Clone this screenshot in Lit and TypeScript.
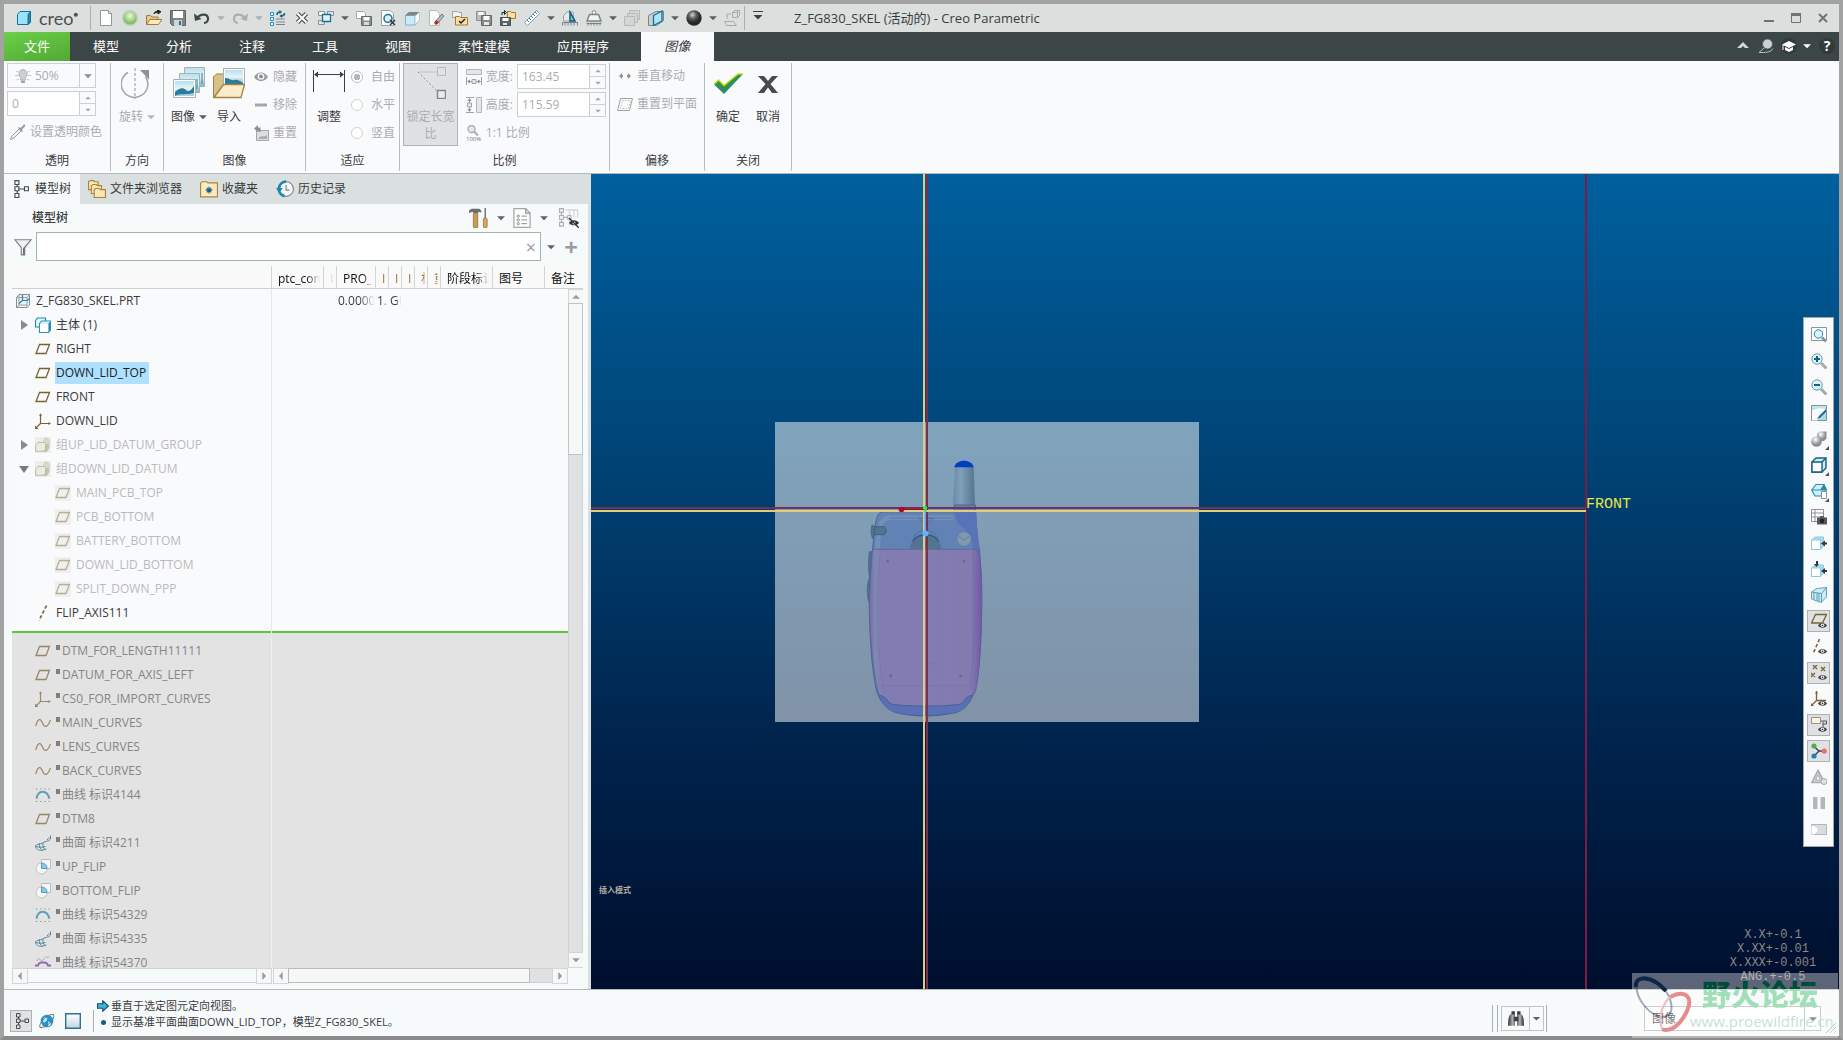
import { LitElement, html, svg, css, nothing } from "lit";
import { customElement, state } from "lit/decorators.js";
import { classMap } from "lit/directives/class-map.js";

const icons: Record<string, unknown> = {
  cube: svg`<path d="M1.5 4.5 4 1.500h10.500v10.500L12 14.500H1.500z" fill="#9be2fb" stroke="#1c6f94"/><path d="M12 14.500V4.500l2.500-3v10.500z" fill="#2b86ad" stroke="#1c6f94"/>`,
  newfile: svg`<path d="M2.500.500h8l3 3v12h-11z" fill="#fff" stroke="#8f9698"/><path d="M10.500.500v3h3" fill="#e3e6e6" stroke="#8f9698"/>`,
  green: svg`<circle cx="8" cy="8" r="7.300" fill="url(#gGreen)" stroke="#c3ccc6" stroke-width="1.400"/>`,
  open: svg`<path d="M.500 14.500V5.500h4l1.500 1.500h6v3" fill="#e6c88a" stroke="#a07c34"/><path d="M.500 14.500 4 9.500h12l-3.500 5z" fill="#fde9bf" stroke="#a07c34"/><path d="M8 4c0-2 2-3 5-2.500M11.500 0l3.500 1.700L12 4z" fill="#222" stroke="#222"/>`,
  save: svg`<path d="M.500.500h15v15h-13l-2-2z" fill="#7c8486" stroke="#5c6466"/><rect x="3" y="1" width="10" height="7" fill="#fff"/><rect x="4" y="10" width="8" height="6" fill="#cfd6d8"/><rect x="9" y="11" width="2" height="4" fill="#2f6f8d"/>`,
  undo: svg`<path d="M3 8.500C5 4.500 13 2.500 14 8c.500 3-1.500 5-4 5" fill="none" stroke="#3f4749" stroke-width="2.200"/><path d="M0 3.500 1 11l6.500-2z" fill="#3f4749"/>`,
  redo: svg`<path d="M13 8.500C11 4.500 3 2.500 2 8c-.500 3 1.500 5 4 5" fill="none" stroke="#a9afb0" stroke-width="2.200"/><path d="M16 3.500 15 11 8.500 9z" fill="#a9afb0"/>`,
  regen: svg`<path d="M.500 2.500h3v3h-3zM.500 7.500h3v3h-3zM.500 12.500h3v3h-3z" fill="#eaf6fb" stroke="#2590b8"/><path d="M6 9h9M6 12h9M6 14.500h9" stroke="#7d8587"/><path d="M7 5c0-2 1-3 3-3M14.500 3c0 2-1 3-3 3" fill="none" stroke="#15607f" stroke-width="1.500"/><path d="M9.500 0v4l2.500-2zM12 4v4L9.500 6z" fill="#15607f"/>`,
  closex: svg`<path d="m3.500 3.500 9 9m0-9-9 9" stroke="#4b5355" stroke-width="4.500"/><path d="m3.500 3.500 9 9m0-9-9 9" stroke="#fff" stroke-width="2"/>`,
  windows: svg`<path d="M.500 1.500h6v4h-6z" fill="#fff" stroke="#8b9294"/><path d="M9.500 1.500h6v4h-6zM.500 10.500h6v4h-6z" fill="#dfe4e4" stroke="#8b9294"/><path d="M4.500 4.500h8v7h-8z" fill="#dff4fb" stroke="#1c6f94" stroke-width="1.300"/>`,
  saveas: svg`<path d="M.500 1.500h7l2 2v5h-9z" fill="#fff" stroke="#a3a9ab"/><path d="M5.500 6.500h10v9h-10z" fill="#84898b" stroke="#64696b"/><rect x="7.500" y="7" width="6" height="3.500" fill="#fff"/><rect x="8" y="12" width="5" height="3" fill="#d5dadb"/>`,
  preview: svg`<path d="M1.500.500h9l3 3v12h-12z" fill="#fff" stroke="#9aa0a2"/><circle cx="8" cy="8.500" r="4" fill="#d8f0f8" stroke="#1c6f94" stroke-width="1.500"/><path d="m10 10 5 5m0-5-5 5" stroke="#33393b" stroke-width="1.500"/>`,
  paste: svg`<path d="M1.500 5.500 5 2.500h10v8l-4 4.500H1.500z" fill="#c8ecf8" stroke="#7fb6ca"/><path d="M1.500 5.500h9.500l4-3M11 5.500v9" fill="none" stroke="#7fb6ca"/><path d="M1 5.500 5 2h10l-4 3.500z" fill="#7c8587"/><path d="M11.500 14V6L15 3v7z" fill="#fff"/>`,
  erase: svg`<path d="M1.500.500h7l3 3v12h-10z" fill="#fafbfb" stroke="#b4b9bb"/><path d="m7 12 7-8 2 2-7 8z" fill="#b8bec0" stroke="#70777a"/><path d="m6.500 12 2-2 2.500 2.500-2 2c-1 1-3.500-1-2.500-2.500z" fill="#a83028"/>`,
  foldercheck: svg`<path d="M.500 1.500h5l1 1h3v5h-9z" fill="#f1f2f2" stroke="#9da3a5"/><path d="M3.500 6.500h4l1 1h7v7.500h-12z" fill="#fbdfa2" stroke="#a07c34"/><path d="m7 11 2 2 4-4" fill="none" stroke="#222" stroke-width="1.500"/>`,
  savecopy: svg`<path d="M.500 1.500h9v9h-9z" fill="#b9bebf" stroke="#8b9193"/><path d="M5.500 5.500h10v10h-10z" fill="#84898b" stroke="#64696b"/><rect x="7.500" y="6" width="6" height="4" fill="#fff"/><rect x="8" y="12" width="5" height="3" fill="#e5eaeb"/><rect x="2.500" y="2" width="5" height="3" fill="#fff"/>`,
  savebak: svg`<path d="M7.500 1.500h3l1 1h4v6h-8z" fill="#fbdfa2" stroke="#a07c34"/><path d="M.500 7.500h10v8h-10z" fill="#5f6668" stroke="#4a5052"/><rect x="2.500" y="8" width="6" height="3" fill="#fff"/><rect x="3" y="13" width="4" height="2" fill="#dfe4e5"/><path d="M2 5V2.500h3M4.500.500v4l2-2z" fill="none" stroke="#222"/>`,
  ruler: svg`<path d="M.500 12.500 12.500.500l3 3-12 12z" fill="#fff" stroke="#8fa0a6"/><path d="m3 10 2 2m0-4 2 2m0-4 2 2m0-4 2 2m0-4 2 2" stroke="#2b86ad"/>`,
  measure: svg`<path d="M1.500 11V5.500L5 2h6l1 9z" fill="#e4e8e9" stroke="#9aa0a2"/><path d="M8 2 13 11H8z" fill="#6ec6e4" stroke="#155a78" stroke-width="1.500"/><path d="M.500 12.500h15v3M3 12.500v3M6 12.500v3M9 12.500v3M12 12.500v3M.500 12.500v3" stroke="#7c8486" fill="none"/>`,
  weight: svg`<path d="M1 11 3.500 4.500h9L15 11z" fill="#f2f4f4" stroke="#7c8486" stroke-width="1.500"/><circle cx="8" cy="2.500" r="1.800" fill="#fff" stroke="#7c8486"/><path d="M.500 13.500h15M2 12.500v3M5 12.500v3M8 12.500v3M11 12.500v3M14 12.500v3" stroke="#7c8486"/>`,
  stack: svg`<g fill="#d2d6d7" stroke="#b4b9ba"><path d="M5.500.500h10v9h-10z"/><path d="M3.500 3.500h10v9h-10z"/><path d="M.500 6.500h10v9h-10z"/></g>`,
  plane3d: svg`<path d="M.500 5.500 8 1.500l7.500 0v9l-7 5h-8z" fill="#c9d0d1" stroke="#7c8486"/><path d="M5.500 5.500 14 1v10l-8.500 4.500z" fill="#a9e6fb" stroke="#1c6f94" stroke-width="1.300"/>`,
  sphere: svg`<circle cx="8" cy="8" r="7.700" fill="url(#gDark)"/>`,
  modelgray: svg`<g fill="none" stroke="#a4aaab"><path d="M8.500 2.500h4l2-2M8.500 2.500h5v5h-5zM13.500 7.500l2-2v-5h-5l-2 2M.500 11.500h9l3 4h-10zM3 9V4h4"/></g>`,
  caret: svg`<path d="M3.500 6h9L8 10.500z"/>`,
  up: svg`<path d="M2 10 8 4l6 6h-4L8 8l-2 2z" fill="#d3d8d8"/>`,
  searchw: svg`<circle cx="9.500" cy="6" r="5" fill="#c7d3d6" stroke="#565f60"/><path d="M6 10 1 14.500h3c5 0 9-.500 11-4" fill="none" stroke="#b9c0c1"/>`,
  cap: svg`<circle cx="8" cy="8" r="8" fill="#333a3a"/><path d="M1 6.500 8 3l7 3.500L8 10z" fill="#fff"/><path d="M4 9v3l4 2 4-2V9l-4 2z" fill="#fff"/><path d="M2 7v5" stroke="#fff"/>`,
  bulb: svg`<g stroke="#c4c7c8"><path d="M1 3l2.500 1M15 3l-2.500 1M0 7.500h3M16 7.500h-3M1.500 12 4 11M14.500 12 12 11"/></g><path d="M8 1.500a4.500 4.500 0 0 1 2.500 8V12h-5V9.500A4.500 4.500 0 0 1 8 1.500z" fill="#cdd0d1" stroke="#b2b5b6"/><path d="M6 12.500h4v2.500H6z" fill="#a3a6a7"/>`,
  picker: svg`<path d="M.500 15.500 2 12l7-7 2 2-7 7z" fill="#eff0f1" stroke="#9b9fa1"/><path d="M8 4l4 4 1-1-1-1.500 3-3C16 1 14.500 0 13.500 1l-3 3L9 3z" fill="#9b9fa1"/>`,
  rotate: svg`<path d="M14 1v31" stroke="#8d9193" stroke-dasharray="3 2"/><path d="M7 5.500A13.300 13.300 0 1 0 24.500 9.500" fill="none" stroke="#a3a7a9" stroke-width="1.500"/><path d="M19 3h9v9.500z" fill="#8d9193"/>`,
  images: svg`<g stroke="#a7b0b3"><path d="M11.500.500h20v19h-20z" fill="url(#gSky)"/><path d="M6.500 6.500h20v19h-20z" fill="url(#gSky)"/><path d="M.500 12.500h22v18h-22z" fill="#fff"/></g><rect x="2" y="14" width="19" height="15" fill="url(#gSky)"/><path d="M29 6v11M24 12v10" stroke="#2a7c9e" stroke-width="2" opacity=".5"/><path d="M2 25c4-4 8-5 11-2s5 0 8-4v10H2z" fill="#2a7c9e"/><path d="M2 29c5-3 12-1 19-3v3z" fill="#a9cfdc"/>`,
  importimg: svg`<path d="M.500 30V9.500L4 7h8v5h10v18z" fill="#dcc089" stroke="#a08344"/><rect x="10.500" y="1.500" width="21" height="17" fill="#fff" stroke="#a7b0b3"/><rect x="12" y="3" width="18" height="14" fill="url(#gSky)"/><path d="M12 11c4 0 6 3 9 2s6 1 9 3v1H12z" fill="#2a7c9e"/><path d="M1 30.500 10.500 17.500H31.500L28 30.500z" fill="#fdecc8" stroke="#a08344" stroke-width="1.300"/>`,
  eye: svg`<path d="M1 8c3-6 11-6 14 0-3 5.500-11 5.500-14 0z" fill="#999d9f"/><circle cx="8" cy="7.500" r="3.300" fill="#f9fafc"/><circle cx="8" cy="7.500" r="2" fill="#8b8f91"/>`,
  minus: svg`<path d="M2 6.500h12v3H2z" fill="#a3a7a9"/>`,
  reset: svg`<path d="M3.500 5.500h12v10h-12z" fill="#dcdfe0" stroke="#a3a7a9"/><path d="M5 14c3-5 5-1 9-4v4z" fill="#a9adae"/><path d="M1 3.500 5 0v2.500h2.500V7h-2V5H5v2z" fill="#8d9193"/>`,
  adjust: svg`<path d="M.500 3v22M31.500 3v22" stroke="#3b3f41"/><path d="M2 7.500h28" stroke="#3b3f41"/><path d="M1 7.500 5 4.500v6zM31 7.500 27 4.500v6z" fill="#3b3f41"/>`,
  lock: svg`<path d="M4 5h19" stroke="#c0c3c4"/><path d="m4 5 20 20" stroke="#8d9193" stroke-dasharray="2 2"/><path d="M23.500.500h8v8h-8z" fill="none" stroke="#b7babb"/><path d="M23.500 23.500h8v8h-8z" fill="#eceded" stroke="#85898b" stroke-width="1.500"/>`,
  wid: svg`<path d="M.500.500h15v5H.500z" fill="#e5e6e7" stroke="#b4b7b9"/><path d="M.500 8v8M15.500 8v8M2 12.500h12" stroke="#a0a3a5"/><path d="M1 12.500l3-2v4zM15 12.500l-3-2v4z" fill="#8d9193"/><path d="M6 10.500h4v4H6z" fill="#e5e6e7" stroke="#a0a3a5"/>`,
  hei: svg`<path d="M10.500.500h5v15h-5z" fill="#e5e6e7" stroke="#b4b7b9"/><path d="M0 .500h8M0 15.500h8M3.500 2v12" stroke="#a0a3a5"/><path d="M3.500 1l-2 3h4zM3.500 15l-2-3h4z" fill="#8d9193"/><path d="M1.500 6h4v4h-4z" fill="#e5e6e7" stroke="#a0a3a5"/>`,
  zoom100: svg`<circle cx="5.500" cy="4" r="3.500" fill="#e5e6e7" stroke="#a9adae" stroke-width="1.300"/><path d="m8 6.500 4 4" stroke="#a9adae" stroke-width="2"/><text x="0" y="16" font-size="6" fill="#707476">100%</text>`,
  hmove: svg`<path d="M6 8H4M12 8h-2" stroke="#8d9193" stroke-width="2"/><path d="M2 8l3-3v6zM14 8l-3-3v6z" fill="#8d9193"/>`,
  resetplane: svg`<path d="M3.500 2.500h12l-3 12H.500z" fill="none" stroke="#9fa3a5"/><path d="M5.500 4.500h8l-2 8h-8z" fill="none" stroke="#9fa3a5" stroke-dasharray="1 2"/>`,
  check: svg`<g transform="translate(0 1)"><path d="M2 16.500 6.500 12l5.500 5.500L26 6h5L12 26z" fill="#2f8f5b"/><path d="m2 16.500 4.500-4.500 5.500 5.500L26 6h5" fill="none" stroke="#c2e600" stroke-width="1.300"/></g>`,
  cross: svg`<path d="M6 9h6l4 5 4-5h6l-7.500 8L26 26h-6l-4-5.500L12 26H6l7.500-9z" fill="#4a4a4c"/>`,
  tree: svg`<g fill="none" stroke="#454b4d"><path d="M3.500 .500h3.500v3.500H3.500zM3.500 6h3.500v3.500H3.500zM3.500 12h3.500v3.500H3.500zM12 6h3.500v3.500H12zM5.500 4v2M5.500 9.500v2.500M7 8h5"/></g>`,
  folders: svg`<g fill="#fbe6b6" stroke="#a8853f"><path d="M.500 1.500 2 .500h3l1 1h3v7h-8.500z"/><path d="M3 5l1.500-1h3l1 1h3.500v7H3z"/><path d="M5.500 8.500 7 7.500h3l1 1h4.500v7h-10z"/></g>`,
  fav: svg`<path d="M.500 3 2 1.500h4l1 1h8.500v12.500H.500z" fill="#fce9bd" stroke="#a8853f"/><path d="M8 6v6M5 9h6M6 7l4 4m0-4-4 4" stroke="#15607f"/>`,
  history: svg`<circle cx="9" cy="8" r="6.500" fill="#f4f7f8" stroke="#7d8587"/><path d="M9 1.500a6.500 6.500 0 0 0-1.500 12.800" fill="none" stroke="#1f86b0" stroke-width="2.500"/><path d="M0 7h6L3 11.500z" fill="#1f86b0"/><path d="M9 4.500V9h3" fill="none" stroke="#777d7f"/>`,
  tools: svg`<path d="M0 4V2l2-1.500h6c1.500.500 2 1.500 2 3L7.500 3v1h-4L3 3z" fill="#6a6f72"/><rect x="3.500" y="4" width="3.500" height="12" rx="1" fill="#c99b55" stroke="#8d6a2c" stroke-width=".6"/><path d="M13 0v8" stroke="#70767a" stroke-width="1.200"/><rect x="11.500" y="8" width="3" height="8" rx="1.200" fill="#d8a95e" stroke="#8d6a2c" stroke-width=".6"/>`,
  list: svg`<path d="M1.500.500h9.500l3.500 3.500v11.500h-13z" fill="#fafbfb" stroke="#a3a9ab"/><path d="M11 .500V4h3.500" fill="none" stroke="#8b9193"/><g stroke="#8e9496" stroke-width=".8"><path d="M7.500 6.500H12M7.500 9.500H12M7.500 12.500H12"/></g><g fill="none" stroke="#7e8486" stroke-width=".7"><circle cx="5" cy="6.500" r=".9"/><circle cx="5" cy="9.500" r=".9"/><circle cx="5" cy="12.500" r=".9"/></g>`,
  treeeye: svg`<g fill="none" stroke="#a9adae" stroke-width=".9"><path d="M.500.500h3v3h-3zM.500 6h3v3h-3zM.500 11.500h3v3h-3zM2 4v2M2 9v2.500M4 7.500h3M7 6h2.500v3H7z"/></g><path d="M5 1.500h10M8.500 1v5M8.500 9v5M12 1.500v6M15 1.500v6" stroke="#cfd2d3" stroke-width=".9"/><path d="M8 12c2-3 6-3 8 0-2 2.500-6 2.500-8 0z" fill="#2c3032"/><circle cx="12" cy="12" r="1.200" fill="#fff"/><path d="m8 8 8 8" stroke="#2c3032"/>`,
  funnel: svg`<path d="M.700 1.500h14.600L9.500 8.500V15h-3V8.500z" fill="#f0f1f1" stroke="#7b8183"/><path d="M8 9v6h1.500V8.500L15 2z" fill="#6c7274"/>`,
  part: svg`<path d="M1.500 4.500 4 1.500h10.500V12L12 14.500H1.500z" fill="#eef1f2" stroke="#8b9193"/><path d="M1.500 4.500H12v10M12 4.500l2.500-3M4 2v10M4 12h8M1.500 14.500 4 12" fill="none" stroke="#8b9193" stroke-width=".8"/><path d="M7.500 2v5.500H12l2.500-2M4 10.500l3.500-3" fill="none" stroke="#1c86b0" stroke-width="1.200"/>`,
  body: svg`<path d="M.500 3.500 2.500 1h8v9h-10z" fill="#eaf8fd" stroke="#1c86b0" stroke-width="1.200"/><path d="M4.500 6.500 6.500 4h9v9l-2 2.500h-9z" fill="#d9f1fa" stroke="#2b93bb" stroke-width="1.200"/><path d="M5 7h8v8H5z" fill="#fff"/><path d="M13.500 15V6.500l2-2V13z" fill="#2b86ad"/>`,
  plane: svg`<path d="M4.500 3.500H14.500L11 12.500H1z" fill="none" stroke="#7b622e" stroke-width="1.300"/>`,
  csys: svg`<path d="M5.500 1v9.500H15M5.500 10.500 1 15" fill="none" stroke="#7b622e" stroke-width="1.200"/><path d="M4 2.800l1.500-2.500L7 2.800zM13.500 9l2.500 1.500-2.500 1.500zM0 12.500v3.500h3.500z" fill="#7b622e"/>`,
  group: svg`<rect width="16" height="16" fill="#ececea"/><circle cx="11.500" cy="4" r="3.500" fill="#d6d4c2"/><path d="M8 7c2 1 5 0 6-1 1 3 0 8-3 9H8z" fill="#bdbba2"/><path d="M.700 8 3 5.500h6.500l1 1v6l-2.500 1.800H.700z" fill="#ebeae0" stroke="#b6b49f"/>`,
  axis: svg`<path d="M11.500.500 4 15.500" stroke="#7b622e" stroke-width="1.600" stroke-dasharray="3.500 2"/>`,
  wave: svg`<path d="M.700 11C3 3 5.500 3 7.500 8s5 5 8-3" fill="none" stroke="#7b622e" stroke-width="1.200"/>`,
  curve: svg`<path d="M1.500 11.500c1.500-8.500 10-9.500 13 0" fill="none" stroke="#1c86b0" stroke-width="2"/><path d="M1 2h14M1 14.500h14" stroke="#5e6668" stroke-dasharray="1.200 3"/><path d="M2 8v5M14 8v5" stroke="#8b9193" stroke-dasharray="1 2"/>`,
  surf: svg`<path d="M15.500.500v3.500c-2 3-6 2-8 4-2 1.500-6 .500-7 3M14 2.500c-.500 1-1 1.500-2 2.500M.500 11c0 3 3 4.500 6 4.500l5-1.500M1 11.500c3 1 6 1 9.500 0M4.500 8.500C4 11 5 14 7 15M8 8c-.500 2 0 5 2 6.500" fill="none" stroke="#15607f"/>`,
  flip: svg`<path d="M6.500.500h9v9h-9z" fill="#fff" stroke="#a9adae"/><circle cx="6.500" cy="9.500" r="5.500" fill="#fff" stroke="#a9adae"/><path d="M6.500 4a5.500 5.500 0 0 1 5.500 5.500H6.500z" fill="#64c2e6" stroke="#1c86b0"/>`,
  purple: svg`<path d="M2 4c2-6 4 2 6-1s4-3 6-3" fill="none" stroke="#8b9193" transform="translate(0 2)"/><path d="M0 10.500h3l1-2 2-1h4l2 1 1 2h3" fill="none" stroke="#7030a0" stroke-width="1.800"/>`,
  zfit: svg`<path d="M.500.500h15v13H.500z" fill="#fff" stroke="#8f9698"/><circle cx="7.500" cy="7" r="4.200" fill="#dff3fa" stroke="#1c86b0"/><path d="m11 10.500 4 4" stroke="#8d9193" stroke-width="2.500"/>`,
  zin: svg`<circle cx="6" cy="6" r="5.200" fill="#dff3fa" stroke="#5d9db5"/><path d="M3 6h6M6 3v6" stroke="#15607f" stroke-width="2"/><path d="m10 10 5.500 5.500" stroke="#a4a8aa" stroke-width="3"/>`,
  zout: svg`<circle cx="6" cy="6" r="5.200" fill="#dff3fa" stroke="#5d9db5"/><path d="M3 6h6" stroke="#15607f" stroke-width="2"/><path d="m10 10 5.500 5.500" stroke="#a4a8aa" stroke-width="3"/>`,
  refit: svg`<path d="M.500.500h15v15H.500z" fill="#a6dcee" stroke="#8b9193"/><path d="M1 3h14V1H1z" fill="#c5e3ee"/><path d="M1 5c5-2 10-2 14-1-2 5-5 8-9 11.500H1z" fill="#fbfcfc"/><path d="m6 14 2-3 7-7v3l-6 6z" fill="#1c6f94"/>`,
  shade: svg`<path d="M6 2.500 9 .500h6.500v7L13 10H6z" fill="url(#gGrey)"/><circle cx="5.500" cy="10.500" r="5.300" fill="url(#gGrey)"/>`,
  wire: svg`<path d="M1 5 5 1h10v10l-4 4H1z" fill="#c6ecf9" stroke="#15607f" stroke-width="1.400"/><path d="M1 5h10v10H1z" fill="#fff" stroke="#15607f" stroke-width="1.400"/><path d="m11 5 4-4" stroke="#15607f" stroke-width="1.400"/>`,
  views: svg`<path d="M.700 7 5 1.500h8l2.500 5.500-4 6H4z" fill="#cdeffa" stroke="#2b8fb5" stroke-width="1.200"/><path d="M9 7 13 1l2.500 6z" fill="#2b86ad"/><path d="M.700 7H15" stroke="#2b8fb5"/><path d="M10.500 8.500h5v7h-5z" fill="#fff" stroke="#8b9193"/>`,
  camera: svg`<path d="M.500.500h12v12H.500zM.500 4h12M.500 8h12M4 .500v12M8 .500" fill="#fff" stroke="#8b9193"/><path d="M6 8.500h2.500l1-1.500h3l1 1.500H16v7H6z" fill="#54595b"/><circle cx="11" cy="12" r="2.200" fill="#222"/>`,
  secx: svg`<path d="M.500 5 4 2h8.500v9l-3 3.500h-9z" fill="#a6dcee" stroke="#8ccbe0"/><path d="M.500 5h9v9.500h-9z" fill="#fff" stroke="#8ccbe0"/><path d="m10 8.500 4-3v2h2v2h-2v2z" fill="#33393b"/>`,
  secy: svg`<path d="M.500 7 4 4h8.500v8l-3 3.500h-9z" fill="#a6dcee" stroke="#8ccbe0"/><path d="M.500 7h9v8.500h-9z" fill="#fff" stroke="#8ccbe0"/><path d="m10 10 4-3v2h2v2h-2v2zM5.500 6 3 3h2V0h2v3h1z" fill="#33393b"/>`,
  glass: svg`<path d="M.500 5 6 1.500l9.500-1V10L10 15.500.500 12z" fill="#c9ecf6" stroke="#6b9fb2"/><path d="m.500 5 10 1.500v9M10.500 6.500l5-6M3 5.500v7M6 6v8M8 6v8.500" fill="none" stroke="#5b9db6"/>`,
  eyeplane: svg`<path d="M4.500 1.500h11l-4 8.500H.500z" fill="none" stroke="#7b622e" stroke-width="1.300"/>`,
  eyeaxis: svg`<path d="M8.500 0 2 15" stroke="#7b622e" stroke-width="1.600" stroke-dasharray="3.500 2"/>`,
  eyepts: svg`<path d="m2 0 4 4m0-4L2 4m8-2 4 4m0-4-4 4M0 8l4 4m0-4-4 4" stroke="#7b622e" stroke-width="1.300"/>`,
  eyecsys: svg`<path d="M5.500 0v9.500H15M5.500 9.500.500 14.500" fill="none" stroke="#7b622e" stroke-width="1.300"/><path d="M4 2.500 5.500 0 7 2.500zM0 12v3h3z" fill="#7b622e"/>`,
  eyenote: svg`<path d="M.500.500h9v6h-9z" fill="#fdf3d2" stroke="#8f9698"/><path d="M10 4h5.500v3H12M12 5v5" fill="none" stroke="#4c5254"/>`,
  spin: svg`<path d="M3 3.500 8 8l5 0M8 8l-5 5" fill="none" stroke="#3b3f41" stroke-width="1.300"/><circle cx="3" cy="3" r="2.600" fill="#4caf50"/><circle cx="3" cy="13" r="2.600" fill="#2180b5"/><circle cx="13.300" cy="8" r="2.600" fill="#ea6f6f"/>`,
  tri: svg`<path d="M7 1.500 13.500 13.500H.900z" fill="#d3d5d6" stroke="#a9acae" stroke-width="1.600"/><path d="M7 6 9.500 11h-5z" fill="#fff" stroke="#a9acae"/><circle cx="13" cy="12.500" r="3" fill="#dfe0e1" stroke="#a9acae"/>`,
  pause: svg`<path d="M2 2h4.500v12H2zM9.500 2H14v12H9.500z" fill="#b4b7b8"/>`,
  exit: svg`<path d="M.500 3.500h15v10H.500z" fill="#d9dbdc" stroke="#b4b7b8"/><path d="M.500 5c7 0 8 6 2 8.500H.500z" fill="#fff"/>`,
  globe: svg`<circle cx="8" cy="8" r="6.300" fill="#2196cc"/><path d="M5 4c2 0 4 1 3 3s-3 3-4 2zM9 9c2-1 3 1 3 2s-2 3-3 2z" fill="#bfe8f8"/><path d="M1 14.500C-1 10 9 0 14.500 1.500 17 6 6 16 1 14.500z" fill="none" stroke="#6b7173"/>`,
  square: svg`<path d="M.700.700h14.600v14.600H.700z" fill="url(#gSq)" stroke="#33708c" stroke-width="1.400"/>`,
  bino: svg`<path d="M2 5 4 3h3v11H1c0-3 0-6 1-9zM14 5l-2-2H9v11h6c0-3 0-6-1-9z" fill="url(#gBino)"/><path d="M4 1h3v3H4zM9 1h3v3H9zM6 6h4v4H6z" fill="#3b3f41"/>`,
  arrowr: svg`<path d="M.700 5h7V1l7.500 7-7.500 7v-4h-7z" fill="#3fb3da" stroke="#12506b" stroke-width="1.400"/>`,
};

const EYES = ["eyeplane", "eyeaxis", "eyepts", "eyecsys", "eyenote"];
const BIG = ["rotate", "images", "importimg", "adjust", "lock", "check", "cross"];

const icon = (name: string, cls = "") => html`<svg
  class="ic ${cls}"
  aria-hidden="true"
  viewBox=${BIG.includes(name) ? "0 0 32 32" : "0 0 16 16"}
>${icons[name]}${EYES.includes(name)
    ? svg`<path d="M7 12.500c2-3.500 7-3.500 9 0-2 3-7 3-9 0z" fill="#3b3f41"/><circle cx="11.500" cy="12.300" r="1.800" fill="#fff"/><circle cx="11.500" cy="12.300" r=".9" fill="#3b3f41"/>`
    : nothing}</svg>`;

const QUICK: [string, string][] = [
  ["newfile", "新建"], ["green", "选择工作目录"], ["open", "打开"], ["save", "保存"],
  ["undo", "撤消"], [">dim", "撤消列表"], ["redo", "重做"], [">dim", "重做列表"],
  ["regen", "重新生成"], ["closex", "关闭"], ["windows", "窗口"], [">", "窗口列表"],
  ["saveas", "另存为"], ["preview", "预览"], ["paste", "粘贴"], ["erase", "拭除"],
  ["foldercheck", "检查"], ["savecopy", "保存副本"], ["savebak", "保存备份"],
  ["ruler", "测量"], [">", "测量列表"], ["measure", "截面"], ["weight", "质量属性"],
  [">", "质量列表"], ["stack", "层"], ["plane3d", "平面"], [">", "平面列表"],
  ["sphere", "外观"], [">", "外观列表"], ["modelgray", "模型显示"],
];

const MENUS = ["模型", "分析", "注释", "工具", "视图", "柔性建模", "应用程序"];

interface Node { t: string; i: string; l?: number; e?: "open" | "closed"; s?: "dim" | "late"; sel?: boolean }
const ACTIVE: Node[] = [
  { t: "主体 (1)", i: "body", e: "closed" },
  { t: "RIGHT", i: "plane" },
  { t: "DOWN_LID_TOP", i: "plane", sel: true },
  { t: "FRONT", i: "plane" },
  { t: "DOWN_LID", i: "csys" },
  { t: "组UP_LID_DATUM_GROUP", i: "group", e: "closed", s: "dim" },
  { t: "组DOWN_LID_DATUM", i: "group", e: "open", s: "dim" },
  { t: "MAIN_PCB_TOP", i: "plane", l: 2, s: "dim" },
  { t: "PCB_BOTTOM", i: "plane", l: 2, s: "dim" },
  { t: "BATTERY_BOTTOM", i: "plane", l: 2, s: "dim" },
  { t: "DOWN_LID_BOTTOM", i: "plane", l: 2, s: "dim" },
  { t: "SPLIT_DOWN_PPP", i: "plane", l: 2, s: "dim" },
  { t: "FLIP_AXIS111", i: "axis" },
];
const LATE: Node[] = ([
  ["DTM_FOR_LENGTH11111", "plane"], ["DATUM_FOR_AXIS_LEFT", "plane"],
  ["CS0_FOR_IMPORT_CURVES", "csys"], ["MAIN_CURVES", "wave"], ["LENS_CURVES", "wave"],
  ["BACK_CURVES", "wave"], ["曲线 标识4144", "curve"], ["DTM8", "plane"],
  ["曲面 标识4211", "surf"], ["UP_FLIP", "flip"], ["BOTTOM_FLIP", "flip"],
  ["曲线 标识54329", "curve"], ["曲面 标识54335", "surf"], ["曲线 标识54370", "purple"],
] as [string, string][]).map(([t, i]) => ({ t, i, s: "late" as const }));

const COLS: [string, string][] = [
  ["ptc_com", "c52"], ["I", "c13 pale"], ["PRO_", "c39"], ["I", "c13"], ["I", "c13"],
  ["I", "c13"], ["材", "c13"], ["重", "c13"], ["阶段标记", "c52"], ["图号", "c52 full"], ["备注", "c39 full"],
];
const VALUES = ["", "", "0.0000", "1.", "GB", "", "", "", "", "", ""];

const VIEW_TOOLS: [string, string, string][] = [
  ["zfit", "重新调整", ""], ["zin", "放大", ""], ["zout", "缩小", ""], ["refit", "重画", ""],
  ["shade", "渲染选项", "more"], ["wire", "显示样式", "more"], ["views", "已保存方向", "more"],
  ["camera", "视图管理器", ""], ["secx", "截面 X", ""], ["secy", "截面 Y", ""], ["glass", "透视图", ""],
  ["eyeplane", "平面显示", "on"], ["eyeaxis", "轴显示", ""], ["eyepts", "点显示", "on"],
  ["eyecsys", "坐标系显示", ""], ["eyenote", "注释显示", "on"], ["spin", "旋转中心", "on"],
  ["tri", "仿真", ""], ["pause", "暂停", ""], ["exit", "退出", ""],
];

@customElement("app-root")
export class AppRoot extends LitElement {
  @state() private fit = "自由";

  static styles = css`
    :host {
      display: block;
      font: 12px/16px "Open Sans", "Noto Sans CJK SC", sans-serif;
      color: #3b3b3d;
    }
    * { box-sizing: border-box; }
    button, input, select { font: inherit; color: inherit; margin: 0; }
    button { background: none; border: 0; padding: 0; display: flex; align-items: center; justify-content: center; white-space: nowrap; }
    .ic { width: 16px; height: 16px; flex: none; display: block; }
    .big { width: 32px; height: 32px; }
    .defs { position: absolute; width: 0; height: 0; }
    .window {
      height: 100vh; display: flex; flex-direction: column;
      border: 4px solid #a2a2a2; border-bottom-color: #8b8b8b; background: #f9fafc;
    }

    .title { flex: none; height: 28px; display: flex; align-items: center; background: #dbe0df; padding: 0 3px 0 12px; }
    .brand { display: flex; align-items: center; gap: 7px; width: 74px; font: 18px/24px "Lato", sans-serif; color: #4b4f51; }
    .brand sup { font-size: 8px; line-height: 8px; align-self: flex-start; margin-left: -7px; margin-top: 4px; }
    .sep { width: 1px; height: 24px; background: #a9afb0; flex: none; }
    .quick { display: flex; align-items: center; padding-left: 3px; }
    .quick button { width: 24px; height: 24px; }
    .quick .drop { width: 14px; }
    .drop .ic { width: 14px; height: 14px; fill: #5a6163; }
    .drop.dim .ic { fill: #a9afb0; }
    .quick .custom { width: 25px; flex-direction: column; }
    .bar { width: 10px; height: 1px; background: #3b3f41; margin-bottom: -3px; }
    .custom .ic { fill: #3b3f41; }
    .title h1 { font-size: 13px; line-height: 20px; font-weight: 400; margin: 0 0 0 24px; flex: 1; }
    .ctl { width: 27px; height: 24px; }
    .ctl .ic { width: 12px; height: 12px; }

    .menu { flex: none; height: 29px; display: flex; background: #3d4646; color: #fff; font-size: 13px; }
    .menu a { color: inherit; text-decoration: none; padding: 0 24px 0 23px; line-height: 29px; }
    .menu .file { background: linear-gradient(165deg, #6ad048, #52a834); padding: 0 20px; }
    .menu .cur { background: #f9fafc; color: #3b3b3d; font-style: italic; margin-left: 8px; }
    .menu .right { margin-left: auto; display: flex; align-items: center; gap: 7px; padding-right: 4px; padding-bottom: 2px; }
    .menu .drop { width: 14px; margin: 0 -2px 0 -4px; }
    .menu .drop .ic { fill: #fff; }
    .help { font-weight: 700; font-size: 14px; width: 16px; height: 16px; border-radius: 8px; background: #333a3a; color: #fff; }

    .ribbon { flex: none; height: 113px; display: flex; padding: 2px 0; border-bottom: 1px solid #b4bbbc; background: #f9fafc; }
    .group { display: flex; flex-direction: column; justify-content: space-between; border-right: 1px solid #b8bdbf; padding: 0 3px 1px; }
    .group > .body { display: flex; }
    .group > .name { text-align: center; line-height: 18px; }
    .w107 { width: 107px; } .w53 { width: 53px; } .w142 { width: 142px; } .w94 { width: 94px; }
    .w210 { width: 210px; } .w95 { width: 95px; } .w87 { width: 87px; }
    .body.shift { padding-left: 2px; }
    .rows { display: flex; flex-direction: column; gap: 3px; }
    .rows.low { padding-top: 1px; }
    .rows.gap { margin-left: 4px; }
    .rows.gap2 { margin-left: 2px; }
    .rows.gap8 { margin-left: 8px; }
    .row { height: 25px; display: flex; align-items: center; justify-content: flex-start; gap: 4px; white-space: nowrap; }
    .pick { padding-left: 3px; }
    .off { color: #aaadaf; }
    .tall { flex-direction: column; justify-content: flex-start; padding-top: 4px; white-space: nowrap; }
    .tall span { margin-top: 9px; line-height: 18px; display: flex; align-items: center; }
    .tall .ar { width: 14px; height: 14px; margin: 0 -3px 0 1px; fill: #5a5d5f; }
    .tall.off .ar { fill: #b4b7b9; }
    .w47 { width: 47px; }
    .w40 { width: 40px; }
    .lock { width: 56px; height: 83px; background: #dfe1e3; border: 1px solid #aeb1b3; padding-top: 3px; }
    .lock span { display: block; width: 50px; white-space: normal; line-height: 17px; text-align: center; }
    .field { position: relative; display: flex; height: 25px; background: #fff; border: 1px solid #cdd0d2; width: 89px; }
    .field input, .field select { flex: 1; min-width: 0; border: 0; background: transparent; padding: 0 4px; outline: 0; appearance: none; }
    .field .nib { width: 16px; border-left: 1px solid #cdd0d2; display: flex; flex-direction: column; }
    .nib button { flex: 1; background: #f9fafc; }
    .nib button + button { border-top: 1px solid #cdd0d2; }
    .nib .ic { width: 10px; height: 10px; fill: #a3a7a9; }
    .flipv { transform: scaleY(-1); }
    .combo { background: #f9fafc; align-items: center; padding-left: 7px; }
    .combo .nib { height: 100%; justify-content: center; align-items: center; }
    .combo .nib .ic { width: 14px; height: 14px; fill: #8d9193; }
    .radio { gap: 8px; }
    .radio input { appearance: none; width: 12px; height: 12px; border: 1px solid #cfd2d4; border-radius: 6px; background: #fff; }
    .radio input:checked { background: radial-gradient(circle, #b4b7b9 3px, #fff 3px); border-color: #b9bcbe; }

    .main { flex: 1; min-height: 0; display: flex; }
    .side { flex: none; width: 587px; display: flex; flex-direction: column; border-right: 3px solid #dae0df; background: #f7fafb; }
    .tabs { flex: none; height: 30px; background: #dae0df; display: flex; align-items: stretch; }
    .tabs button { gap: 4px; padding: 0 10px 0 8px; }
    .tabs .on { background: #f7fafb; gap: 6px; padding: 0 9px 0 7px; }
    .tabs .ic { width: 18px; height: 18px; }
    .bar2 { flex: none; height: 28px; display: flex; align-items: center; padding: 0 9px 0 28px; }
    .bar2 h2 { font-size: 12px; font-weight: 500; margin: 0 auto 0 0; }
    .bar2 .ic { width: 20px; height: 20px; }
    .bar2 .drop { width: 23px; }
    .bar2 .last { margin-left: 4px; }
    .bar2 .drop .ic, .find .drop .ic { width: 14px; height: 14px; }
    .find { flex: none; display: flex; align-items: center; padding: 0 10px; height: 29px; margin-bottom: 5px; }
    .find > .ic { width: 18px; height: 18px; margin-right: 4px; }
    .find .box { flex: 1; height: 29px; display: flex; border: 1px solid #a3b3b0; background: #fff; }
    .find input { flex: 1; border: 0; outline: 0; background: transparent; }
    .find .clear { width: 18px; color: #9a9d9f; font-size: 18px; }
    .find .drop { width: 19px; }
    .plus { width: 14px; color: #999c9e; font-size: 24px; font-weight: 700; margin-left: 4px; }
    .grid { flex: 1; min-height: 0; margin: 0 5px 0 8px; position: relative; overflow: hidden; background: #f9fafc; }
    table { border-collapse: separate; border-spacing: 0; table-layout: fixed; width: 100%; }
    th { height: 23px; padding: 3px 0 0 6px; text-align: left; font-weight: 400; color: #111; background: #f9f9f9; border-left: 1px solid #d3d5d6; border-bottom: 1px solid #ccd0d1; overflow: hidden; white-space: nowrap; }
    th:first-child { border-left: 0; }
    th div { overflow: hidden; line-height: 18px; margin-right: 3px; -webkit-mask-image: linear-gradient(90deg, #000 70%, transparent); mask-image: linear-gradient(90deg, #000 70%, transparent); }
    th.full div { -webkit-mask-image: none; mask-image: none; margin: 0; }
    .c13 div { color: #a5762c; margin-right: 2px; }
    .pale div { color: #e9dcc4; }
    .ctree { width: 259px; } .c52 { width: 52px; } .c39 { width: 39px; } .c13 { width: 13px; }
    td { height: 24px; padding: 0; white-space: nowrap; overflow: hidden; }
    td div { overflow: hidden; padding-left: 2px; -webkit-mask-image: linear-gradient(90deg, #000 60%, transparent); mask-image: linear-gradient(90deg, #000 60%, transparent); }
    td:nth-child(2) { border-left: 1px solid #e6e9ea; }
    .tn span.line { display: flex; align-items: center; height: 24px; padding-left: 4px; }
    .root .tn span.line { padding-left: 3px; }
    .deep .tn span.line { padding-left: 24px; }
    .exp { width: 19px; height: 16px; display: flex; align-items: center; padding-left: 5px; flex: none; }
    .exp i { border: 5px solid transparent; border-left: 7px solid #8b8b8d; border-right: 0; }
    .exp .dn { border: 5px solid transparent; border-top: 7px solid #7b7b7d; border-bottom: 0; margin-left: -2px; }
    .lab { margin-left: 4px; padding: 0 1px; line-height: 22px; }
    .sel .lab { background: #ade1ff; color: #222; padding-right: 3px; }
    .dim { color: #b9babb; }
    .dim .tn .ic { opacity: .9; }
    .deep .tn .ic { opacity: .5; background: #e6e6e4; }
    .late { color: #858585; background: #e3e3e3; }
    .late .tn .ic { opacity: .7; }
    .late td:nth-child(2) { border-left-color: #f1f1f1; }
    .late .lab { display: flex; gap: 2px; }
    .late .lab::before { content: ""; width: 4px; height: 5px; margin-top: 5px; background: #7f7f7f; }
    .insert td { height: 14px; background: linear-gradient(#f9fafc 6px, #5cc83c 6px, #5cc83c 8px, #e3e3e3 8px); }
    .vbar { position: absolute; right: 0; top: 23px; bottom: 0; width: 15px; display: flex; flex-direction: column; background: #dfe1e3; border: 1px solid #cfd2d3; }
    .vbar button, .hbar button { flex: none; width: 14px; height: 14px; background: #f6f7f7; outline: 1px solid #d3d6d7; }
    .vbar .ic, .hbar .ic { width: 14px; height: 14px; fill: #9a9d9f; }
    .vthumb { flex: 3; background: #f6f7f7; outline: 1px solid #c0c3c4; }
    .vrest { flex: 10; }
    .left { transform: rotate(90deg); } .rightw { transform: rotate(-90deg); }
    .hbars { flex: none; height: 15px; margin: 0 20px 6px 8px; display: flex; gap: 1px; }
    .hbar { display: flex; height: 15px; border: 1px solid #cfd2d3; background: #f7fafb; }
    .hbar.a { width: 260px; justify-content: space-between; }
    .hbar.b { flex: 1; background: #dfe1e3; }
    .hthumb { flex: 10; margin-left: 1px; background: #f6f7f7; outline: 1px solid #b9bcbd; }
    .hrest { flex: 1; }

    .view { flex: 1; min-width: 0; position: relative; overflow: hidden; background: linear-gradient(#00609e, #004679 32%, #00244d 69%, #000e2d); }
    .datum { position: absolute; }
    .rv { left: 335px; top: 0; bottom: 0; width: 2px; background: #7d2c54; }
    .yv { left: 332px; top: 0; bottom: 0; width: 2px; background: #d9cf7c; }
    .edge { left: 994px; top: 0; bottom: 0; width: 2px; background: #7f1a46; }
    .rh { left: 0; width: 995px; top: 333px; height: 2px; background: #7d2c54; }
    .yh { left: 0; width: 995px; top: 336px; height: 2px; background: #d9cf7c; }
    .picture { position: absolute; left: 184px; top: 248px; width: 424px; height: 300px; }
    .handles { position: absolute; left: 306px; top: 324px; width: 40px; height: 40px; }
    .flabel { position: absolute; left: 995px; top: 322px; font: 15px/18px "Liberation Mono", monospace; color: #e6e640; }
    .mode { position: absolute; left: 8px; bottom: 92px; font-size: 8px; font-weight: 600; line-height: 14px; color: #b5aca0; }
    .tol { position: absolute; right: 19px; bottom: 5px; width: 94px; text-align: center; font: 12px/14px "Liberation Mono", monospace; color: #8b8782; }
    .tool { position: absolute; right: 5px; top: 143px; width: 31px; padding: 4px 3px; background: #f9fafb; border: 1px solid #a3a6a8; }
    .tool button { position: relative; width: 23px; height: 26px; }
    .tool .on::before { content: ""; position: absolute; inset: 2px 0; border: 1px solid #aeb1b3; background: #dfe1e3; }
    .tool .ic { position: relative; }
    .tool .more::after { content: ""; position: absolute; right: 1px; bottom: 2px; border-left: 4px solid transparent; border-bottom: 4px solid #4c5052; }

    .status { flex: none; height: 47px; position: relative; border-top: 1px solid #b4bbbc; background: #f7fafb; display: flex; align-items: flex-end; padding: 0 2px 4px 6px; }
    .status .sq { width: 22px; height: 22px; margin-right: 4px; }
    .status .sq.on { background: #dfe1e3; border: 1px solid #aeb1b3; }
    .vs { width: 1px; height: 22px; background: #a9afb0; margin-left: 5px; }
    .msg { font-size: 11px; line-height: 16px; margin: 0 auto 2px 3px; padding: 0; list-style: none; }
    .msg li { display: flex; align-items: center; gap: 2px; }
    .msg .ic { width: 12px; height: 12px; }
    .dot { width: 12px; display: flex; justify-content: center; }
    .dot i { width: 5px; height: 5px; border-radius: 3px; background: #15607f; }
    .find3 { display: flex; align-items: center; gap: 3px; height: 27px; border-left: 1px solid #a9afb0; border-right: 1px solid #a9afb0; padding: 0 2px 0 4px; margin-right: 97px; }
    .find3 .inner { display: flex; height: 25px; border: 1px solid #c3c6c8; }
    .find3 .vs { margin: 0; height: 27px; }
    .find3 button { width: 27px; }
    .find3 .drop { width: 14px; border-left: 1px solid #c3c6c8; }
    .find3 .ic { width: 18px; height: 18px; }
    .find3 .drop .ic { width: 13px; height: 13px; }
    .filter { width: 177px; padding-left: 3px; margin-right: 16px; margin-bottom: 1px; color: #222; border-color: #aeb1b3; }
    .filter .nib { align-items: center; justify-content: center; border-color: #aeb1b3; }
    .filter .nib .ic { width: 14px; height: 14px; fill: #4c5052; }
    .grip { position: absolute; right: 2px; bottom: 2px; width: 12px; height: 12px; }
    .mark { position: absolute; right: 1px; bottom: -2px; width: 206px; height: 65px; background: rgba(255, 255, 255, .36); overflow: hidden; pointer-events: none; }
    .mark svg { position: absolute; left: 0; top: 0; width: 60px; height: 62px; }
    .mark b { position: absolute; left: 70px; top: 3px; font: 900 29px/34px "Noto Sans CJK SC", sans-serif; white-space: nowrap; color: transparent; background: linear-gradient(#004c3a 13px, #a0dfb8 13px); -webkit-background-clip: text; background-clip: text; }
    .mark span { position: absolute; left: 58px; top: 39px; font: 15px/18px "Open Sans", sans-serif; color: #c3e2dc; }
  `;

  private spinField(id: string, label: string, value: string) {
    return html`<div class="field off">
      <input id=${id} aria-label=${label} .value=${value} />
      <div class="nib">
        <button aria-label="${label}增大">${icon("caret", "flipv")}</button>
        <button aria-label="${label}减小">${icon("caret")}</button>
      </div>
    </div>`;
  }

  private treeRow(n: Node) {
    return html`<tr class=${classMap({ dim: n.s === "dim", late: n.s === "late", sel: !!n.sel, deep: n.l === 2 })}>
      <td class="tn"><span class="line">
        <span class="exp">${n.e ? html`<i class=${n.e === "open" ? "dn" : ""}></i>` : nothing}</span>
        ${icon(n.i)}<span class="lab">${n.t}</span>
      </span></td>
      <td colspan="11"></td>
    </tr>`;
  }

  private renderTop() {
    return html`
      <header class="title">
        <div class="brand">${icon("cube")}<span>creo</span><sup>●</sup></div>
        <i class="sep"></i>
        <div class="quick">
          ${QUICK.map(([n, l]) => n.startsWith(">")
            ? html`<button class="drop ${n.slice(1)}" aria-label=${l}>${icon("caret")}</button>`
            : html`<button aria-label=${l}>${icon(n)}</button>`)}
          <i class="sep"></i>
          <button class="custom" aria-label="自定义快速访问工具栏"><i class="bar"></i>${icon("caret")}</button>
        </div>
        <h1>Z_FG830_SKEL (活动的) - Creo Parametric</h1>
        <button class="ctl" aria-label="最小化"><svg class="ic" viewBox="0 0 12 12"><path d="M1 8h10v2H1z" fill="#6e7375"/></svg></button>
        <button class="ctl" aria-label="最大化"><svg class="ic" viewBox="0 0 12 12"><path d="M1.500 2v8.500h9V2" fill="none" stroke="#6e7375"/><path d="M1 1h10v3H1z" fill="#6e7375"/></svg></button>
        <button class="ctl" aria-label="关闭"><svg class="ic" viewBox="0 0 12 12"><path d="m2 2 8 8m0-8-8 8" stroke="#6e7375" stroke-width="2"/></svg></button>
      </header>
      <nav class="menu">
        <a class="file" href="#file">文件</a>
        ${MENUS.map((m) => html`<a href="#${m}">${m}</a>`)}
        <a class="cur" href="#image">图像</a>
        <div class="right">
          <button aria-label="最小化功能区">${icon("up")}</button>
          <button aria-label="搜索">${icon("searchw")}</button>
          <button aria-label="学习">${icon("cap")}</button>
          <button class="drop" aria-label="学习列表">${icon("caret")}</button>
          <button class="help" aria-label="帮助">?</button>
        </div>
      </nav>`;
  }

  private renderRibbon() {
    return html`<section class="ribbon">
      <div class="group w107"><div class="body"><div class="rows">
        <div class="field combo off">${icon("bulb")}
          <select aria-label="透明度"><option>50%</option></select>
          <span class="nib">${icon("caret")}</span></div>
        ${this.spinField("alpha", "透明值", "0")}
        <button class="row pick off">${icon("picker")}<span>设置透明颜色</span></button>
      </div></div><div class="name">透明</div></div>

      <div class="group w53"><div class="body">
        <button class="tall w47 off">${icon("rotate", "big")}<span>旋转${icon("caret", "ar")}</span></button>
      </div><div class="name">方向</div></div>

      <div class="group w142"><div class="body shift">
        <button class="tall w40">${icon("images", "big")}<span>图像${icon("caret", "ar")}</span></button>
        <button class="tall w40">${icon("importimg", "big")}<span>导入</span></button>
        <div class="rows low gap">
          <button class="row off">${icon("eye")}<span>隐藏</span></button>
          <button class="row off">${icon("minus")}<span>移除</span></button>
          <button class="row off">${icon("reset")}<span>重置</span></button>
        </div>
      </div><div class="name">图像</div></div>

      <div class="group w94"><div class="body">
        <button class="tall w40">${icon("adjust", "big")}<span>调整</span></button>
        <div class="rows low gap2">
          ${["自由", "水平", "竖直"].map((o) => html`<label class="row radio off">
            <input type="radio" name="fit" .checked=${this.fit === o} @change=${() => (this.fit = o)} />${o}</label>`)}
        </div>
      </div><div class="name">适应</div></div>

      <div class="group w210"><div class="body">
        <button class="tall lock off">${icon("lock", "big")}<span>锁定长宽比</span></button>
        <div class="rows low gap8">
          <div class="row off">${icon("wid")}<label for="w">宽度:</label>${this.spinField("w", "宽度", "163.45")}</div>
          <div class="row off">${icon("hei")}<label for="h">高度:</label>${this.spinField("h", "高度", "115.59")}</div>
          <button class="row off">${icon("zoom100")}<span>1:1 比例</span></button>
        </div>
      </div><div class="name">比例</div></div>

      <div class="group w95"><div class="body"><div class="rows gap">
        <button class="row off">${icon("hmove")}<span>垂直移动</span></button>
        <button class="row off">${icon("resetplane")}<span>重置到平面</span></button>
      </div></div><div class="name">偏移</div></div>

      <div class="group w87"><div class="body">
        <button class="tall w40">${icon("check", "big")}<span>确定</span></button>
        <button class="tall w40">${icon("cross", "big")}<span>取消</span></button>
      </div><div class="name">关闭</div></div>
    </section>`;
  }

  private renderSide() {
    return html`<aside class="side">
      <div class="tabs">
        <button class="on">${icon("tree")}模型树</button>
        <button>${icon("folders")}文件夹浏览器</button>
        <button>${icon("fav")}收藏夹</button>
        <button>${icon("history")}历史记录</button>
      </div>
      <div class="bar2">
        <h2>模型树</h2>
        <button aria-label="设置">${icon("tools")}</button>
        <button class="drop" aria-label="设置列表">${icon("caret")}</button>
        <button aria-label="显示">${icon("list")}</button>
        <button class="drop" aria-label="显示列表">${icon("caret")}</button>
        <button class="last" aria-label="隐藏树列">${icon("treeeye")}</button>
      </div>
      <div class="find">
        ${icon("funnel")}
        <div class="box"><input aria-label="筛选" /><button class="clear" aria-label="清除">×</button></div>
        <button class="drop" aria-label="筛选列表">${icon("caret")}</button>
        <button class="plus" aria-label="添加">+</button>
      </div>
      <div class="grid">
        <table>
          <thead><tr><th class="ctree" aria-label="名称"></th>${COLS.map(([t, c]) => html`<th class=${c}><div>${t}</div></th>`)}</tr></thead>
          <tbody>
            <tr class="root">
              <td class="tn"><span class="line">${icon("part")}<span class="lab">Z_FG830_SKEL.PRT</span></span></td>
              ${VALUES.map((v) => html`<td><div>${v}</div></td>`)}
            </tr>
            ${ACTIVE.map((n) => this.treeRow(n))}
            <tr class="insert"><td class="tn"></td><td colspan="11"></td></tr>
            ${LATE.map((n) => this.treeRow(n))}
          </tbody>
        </table>
        <div class="vbar">
          <button aria-label="向上滚动">${icon("caret", "flipv")}</button>
          <div class="vthumb"></div><div class="vrest"></div>
          <button aria-label="向下滚动">${icon("caret")}</button>
        </div>
      </div>
      <div class="hbars">
        <div class="hbar a">
          <button aria-label="向左滚动">${icon("caret", "left")}</button>
          <button aria-label="向右滚动">${icon("caret", "rightw")}</button>
        </div>
        <div class="hbar b">
          <button aria-label="列向左滚动">${icon("caret", "left")}</button>
          <div class="hthumb"></div><div class="hrest"></div>
          <button aria-label="列向右滚动">${icon("caret", "rightw")}</button>
        </div>
      </div>
    </aside>`;
  }

  private renderView() {
    return html`<main class="view">
      <svg class="picture" viewBox="45 36 1272 900" aria-label="手机参考图像">
        <rect x="45" y="36" width="1272" height="900" fill="#fff" fill-opacity=".5"/>
        <path d="M585 170h56l4 115h-66z" fill="url(#gAnt)"/>
        <path d="M583 172c4-26 54-26 58 0z" fill="#0040c0"/>
        <path d="M579 285h67v30h-60z" fill="#7088ae"/>
        <path d="M336 345c-4 10-4 30 2 42l6-14h28c8-6 8-18 0-24h-28zM328 425c-3 20-4 50 0 74v4c-8 20-8 50-2 72l12-2V425z" fill="#4f7090" stroke="#456483" stroke-width="2"/>
        <path d="M368 305H582c2-8 2-14 2-20h62c3 45 3 90 12 133 6 60 8 110 7 180-1 90-6 180-17 230-6 34-24 55-52 72-50 24-150 24-200 0-26-14-44-40-48-66-12-54-19-150-20-240 0-70 4-120 12-200 4-34 6-60 12-75 4-10 10-14 18-14z" fill="#6182b4" stroke="#4b6499" stroke-width="3"/>
        <path d="M650 340c4 40 8 60 8 78l-18 0c-4-30-20-60-46-75l-12-38h64z" fill="#5873b8"/>
        <path d="M352 418c4-60 8-95 36-95h192" fill="none" stroke="#7d98ba" stroke-width="14" opacity=".6"/>
        <path d="M388 324h190" stroke="#4f6c9c" stroke-width="2"/>
        <path d="M344 350h28c8 6 8 18 0 24h-28z" fill="#53748f" stroke="#3f5f80" stroke-width="3"/>
        <path d="M338 418H657c6 60 9 110 8 180-1 90-6 180-17 240-2 8-6 14-10 18-26 2-20 26-44 28-60 6-130 6-190 0-24-2-20-26-46-28-12-32-28-150-30-256 0-60 4-122 10-182z" fill="url(#gPhone)" stroke="#5b5f9a" stroke-width="2"/>
        <path d="M362 420c-12 110-14 280 8 420M638 420c8 110 8 280-8 420" fill="none" stroke="#6c689f" stroke-width="2" opacity=".6"/>
        <path d="M356 856c26 2 22 26 46 28 60 6 130 6 190 0 26-2 18-26 46-28-10 30-30 46-50 52-50 12-140 12-180 0-22-6-44-26-52-52z" fill="#5a70b4" stroke="#43599a" stroke-width="2"/>
        <path d="M450 418c4-62 90-62 94 0z" fill="#53748f"/>
        <path d="M458 394c14-26 64-26 78 0" fill="none" stroke="#35577c" stroke-width="4"/>
        <path d="M460 384c12-30 60-30 74 0M478 325h40c-4 16-34 16-40 0z" fill="none" stroke="#4a6798" stroke-width="2"/>
        <circle cx="612" cy="387" r="22" fill="#8097b0" stroke="#627fa2" stroke-width="3"/>
        <path d="m594 376 18 15 20-15" fill="none" stroke="#5a7390" stroke-width="2"/>
        <g fill="#706ca5" stroke="#5f5b98" stroke-width="2"><circle cx="383" cy="454" r="3"/><circle cx="612" cy="454" r="3"/><circle cx="392" cy="797" r="3"/><circle cx="602" cy="797" r="3"/></g>
        <path d="M360 827h278M500 760h22v10" fill="none" stroke="#746ba3" stroke-width="2" opacity=".5"/>
      </svg>
      <i class="datum edge"></i><i class="datum rv"></i><i class="datum rh"></i><i class="datum yv"></i><i class="datum yh"></i>
      <svg class="handles" viewBox="0 0 40 40" aria-hidden="true">
        <path d="M4 11.500h24" stroke="#a5093f"/><circle cx="4.500" cy="11.500" r="2.800" fill="#a5093f"/>
        <path d="M28 11v24" stroke="#5fb4ff" stroke-width="1.500"/><circle cx="28.500" cy="35.500" r="3" fill="#5fb4ff"/>
        <path d="M26 9.500h4M29 9v4" stroke="#25f025" stroke-width="2" fill="none"/>
      </svg>
      <span class="flabel">FRONT</span>
      <span class="mode">插入模式</span>
      <div class="tol"><div>X.X+-0.1</div><div>X.XX+-0.01</div><div>X.XXX+-0.001</div><div>ANG.+-0.5</div></div>
      <div class="tool">${VIEW_TOOLS.map(([n, l, c]) => html`<button class=${c} aria-label=${l}>${icon(n)}</button>`)}</div>
    </main>`;
  }

  render() {
    return html`
      <svg class="defs" aria-hidden="true"><defs>
        <radialGradient id="gGreen" cy=".35"><stop offset="0" stop-color="#eaf9dc"/><stop offset="1" stop-color="#7fbf62"/></radialGradient>
        <radialGradient id="gDark" cx=".4" cy=".3"><stop offset="0" stop-color="#d5d7d8"/><stop offset=".5" stop-color="#5b5e60"/><stop offset="1" stop-color="#26282a"/></radialGradient>
        <radialGradient id="gGrey" cx=".4" cy=".3"><stop offset="0" stop-color="#fff"/><stop offset="1" stop-color="#8b8e90"/></radialGradient>
        <linearGradient id="gSky" x2="0" y2="1"><stop offset="0" stop-color="#b5e1f0"/><stop offset=".5" stop-color="#e8f4f4"/><stop offset="1" stop-color="#7fb4c8"/></linearGradient>
        <linearGradient id="gSq" x2="0" y2="1"><stop offset="0" stop-color="#fff"/><stop offset="1" stop-color="#c2d6de"/></linearGradient>
        <linearGradient id="gBino"><stop offset="0" stop-color="#333"/><stop offset=".3" stop-color="#b5b5b5"/><stop offset=".5" stop-color="#333"/><stop offset=".75" stop-color="#b5b5b5"/><stop offset="1" stop-color="#222"/></linearGradient>
        <linearGradient id="gAnt"><stop offset="0" stop-color="#6a8ba6"/><stop offset=".35" stop-color="#809fb9"/><stop offset="1" stop-color="#56748e"/></linearGradient>
        <linearGradient id="gPhone"><stop offset="0" stop-color="#7a68aa"/><stop offset=".05" stop-color="#8088b2"/><stop offset=".12" stop-color="#817cb2"/><stop offset=".9" stop-color="#837bb0"/><stop offset="1" stop-color="#7457a6"/></linearGradient>
      </defs></svg>
      <div class="window">
        ${this.renderTop()}
        ${this.renderRibbon()}
        <div class="main">${this.renderSide()}${this.renderView()}</div>
        <footer class="status">
          <button class="sq on" aria-label="模型树">${icon("tree")}</button>
          <button class="sq" aria-label="浏览器">${icon("globe")}</button>
          <button class="sq" aria-label="全屏">${icon("square")}</button>
          <i class="vs"></i>
          <ul class="msg">
            <li>${icon("arrowr")}垂直于选定图元定向视图。</li>
            <li><span class="dot"><i></i></span>显示基准平面曲面DOWN_LID_TOP，模型Z_FG830_SKEL。</li>
          </ul>
          <div class="find3"><i class="vs"></i><div class="inner">
            <button aria-label="查找">${icon("bino")}</button>
            <button class="drop" aria-label="查找列表">${icon("caret")}</button>
          </div></div>
          <div class="field filter"><select aria-label="选择过滤器"><option>图像</option></select><span class="nib">${icon("caret")}</span></div>
          <svg class="grip" viewBox="0 0 12 12" aria-hidden="true"><path d="M1 11 11 1M5 11l6-6M9 11l2-2" stroke="#a3a7a9"/></svg>
          <div class="mark">
            <svg viewBox="0 0 60 62" aria-hidden="true">
              <ellipse cx="22" cy="24" rx="13" ry="23" transform="rotate(-38 22 24)" fill="none" stroke="#123055" stroke-width="2" opacity=".4"/>
              <path d="M4 14C2 2 20 2 34 18" fill="none" stroke="#0d2547" stroke-width="4"/>
              <path d="M38 24C54 16 62 24 54 40 48 52 38 60 30 56" fill="none" stroke="#e58c8c" stroke-width="4"/>
              <path d="M38 24C30 32 26 44 30 56" fill="none" stroke="#eebcbc" stroke-width="2"/>
            </svg>
            <b>野火论坛</b><span>www.proewildfire.cn</span>
          </div>
        </footer>
      </div>`;
  }
}
